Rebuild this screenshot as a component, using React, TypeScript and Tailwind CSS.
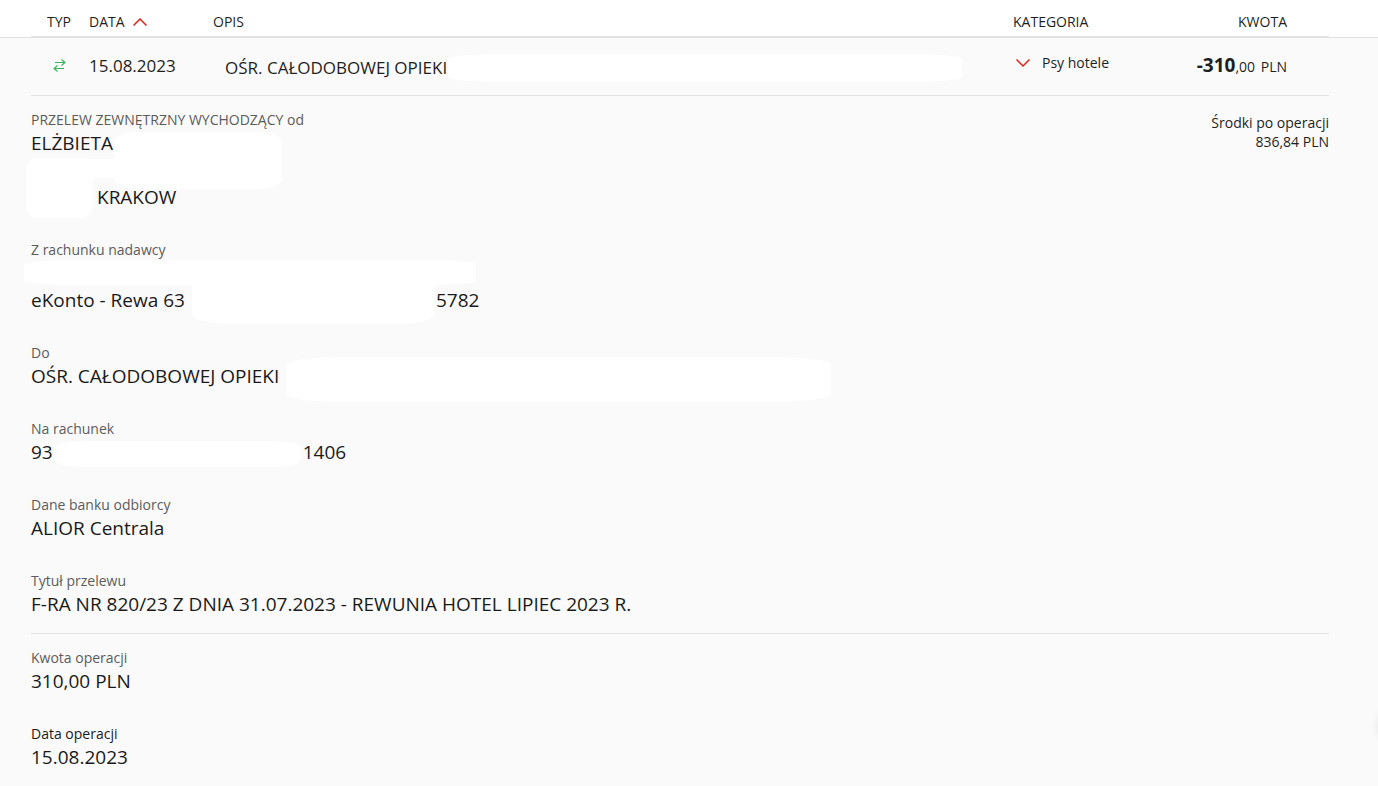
import type { ReactNode } from "react";

const recipientFields = [
  { label: "Dane banku odbiorcy", value: "ALIOR Centrala" },
  { label: "Tytuł przelewu", value: "F-RA NR 820/23 Z DNIA 31.07.2023 - REWUNIA HOTEL LIPIEC 2023 R." },
];

function Chevron({ up = false }: { up?: boolean }) {
  return (
    <svg width="14" height="8" viewBox="0 0 14 8" fill="none" stroke="#d8261c" strokeWidth="1.5" aria-hidden="true">
      <path d={up ? "M0.5 7.5L7 1L13.5 7.5" : "M0.5 0.5L7 7L13.5 0.5"} />
    </svg>
  );
}

function TransferIcon() {
  return (
    <svg className="ml-[22px]" width="13" height="14" viewBox="0 0 13 14" fill="none" stroke="#35b556" strokeWidth="1.1" role="img" aria-label="Przelew">
      <path d="M2 3.5H12M8.5 0.5L12 3.5L8.5 6.5" />
      <path d="M11 9.5H1M4.5 6.5L1 9.5L4.5 12.5" />
    </svg>
  );
}

// White patch that covers private data
function Mask({ className }: { className: string }) {
  return <span aria-hidden="true" className={`absolute bg-white ${className}`} />;
}

function Field({ label, dark = false, children }: { label: string; dark?: boolean; children: ReactNode }) {
  return (
    <div>
      <dt className={`text-sm leading-5 ${dark ? "text-[#1a1a1a]" : "text-[#5c5c5c]"}`}>{label}</dt>
      <dd className="relative text-[19px] leading-[27px] text-[#1a1a1a]">{children}</dd>
    </div>
  );
}

export default function App() {
  return (
    <main className="relative min-h-screen overflow-hidden bg-[#fafafa] font-['Open_Sans',sans-serif] text-[#1f1f1f]">
      <table className="w-full table-fixed border-separate border-spacing-0">
        <colgroup>
          <col className="w-[31px]" />
          <col className="w-[58px]" />
          <col className="w-[124px]" />
          <col />
          <col className="w-[162px]" />
          <col className="w-[154px]" />
          <col className="w-[49px]" />
        </colgroup>
        <thead className="bg-white text-left text-sm">
          <tr className="h-[38px] *:border-[#e1e1e1] *:p-0 *:pt-2 *:font-normal">
            <td className="border-b" />
            <th className="border-b-2"><span className="ml-4">TYP</span></th>
            <th className="border-b-2">
              <button type="button" className="flex items-center gap-2">
                DATA <Chevron up />
              </button>
            </th>
            <th className="border-b-2">OPIS</th>
            <th className="border-b-2">KATEGORIA</th>
            <th className="border-b-2"><span className="mr-[42px] block text-right">KWOTA</span></th>
            <td className="border-b" />
          </tr>
        </thead>
        <tbody>
          <tr className="h-[58px] *:border-[#e1e1e1] *:p-0 *:pb-0.5">
            <td />
            <td className="border-b"><TransferIcon /></td>
            <td className="border-b text-[17px]">15.08.2023</td>
            <td className="border-b text-[17px] leading-6">
              <div className="relative pt-1 pl-3">
                OŚR. CAŁODOBOWEJ OPIEKI
                <Mask className="top-0.5 left-[235px] h-7 w-[514px] rounded-[50px/5px]" />
              </div>
            </td>
            <td className="border-b">
              <button type="button" className="flex items-center gap-3 pb-1.5 pl-[3px] text-sm">
                <Chevron /> Psy hotele
              </button>
            </td>
            <td className="border-b text-right">
              <span className="mr-[42px] block text-sm">
                <b className="text-[19px]">-310</b>,00 <span className="ml-0.5">PLN</span>
              </span>
            </td>
            <td />
          </tr>
        </tbody>
      </table>

      <section className="mr-[49px] ml-[31px] flex items-start justify-between border-b border-[#e1e1e1] pt-3.5 pb-[15px]">
        <dl className="flex flex-col gap-[29px]">
          <Field label="PRZELEW ZEWNĘTRZNY WYCHODZĄCY od">
            ELŻBIETA
            <Mask className="top-0.5 left-[83px] h-[57px] w-[168px] rounded-[24px/10px]" />
            <Mask className="top-7 left-[-5px] h-[60px] w-[67px] rounded-[12px]" />
            <Mask className="top-[29px] left-[50px] h-[19px] w-20" />
            <span className="block pt-[27px] pl-[66px]">KRAKOW</span>
          </Field>
          <Field label="Z rachunku nadawcy">
            <Mask className="top-0 left-[-7px] h-[25px] w-[452px] rounded-[60px/4px]" />
            <Mask className="top-5 left-[161px] h-11 w-[243px] rounded-b-[40px_10px]" />
            <span className="relative flex gap-[251px] pt-[27px]">
              <span>eKonto - Rewa 63</span>
              <span>5782</span>
            </span>
          </Field>
          <Field label="Do">
            OŚR. CAŁODOBOWEJ OPIEKI
            <Mask className="top-[-6px] left-[255px] h-[45px] w-[545px] rounded-[60px/8px]" />
          </Field>
          <Field label="Na rachunek">
            <Mask className="top-[2px] left-[24px] h-[26px] w-[246px] rounded-[30px/7px]" />
            <span className="relative flex gap-[250px]">
              <span>93</span>
              <span>1406</span>
            </span>
          </Field>
          {recipientFields.map((field) => (
            <Field key={field.label} label={field.label}>
              {field.value}
            </Field>
          ))}
        </dl>
        <p className="pt-[3px] text-right text-sm leading-[19px]">
          Środki po operacji
          <br />
          836,84 PLN
        </p>
      </section>

      <dl className="mr-[49px] ml-[31px] flex flex-col gap-[29px] pt-3.5">
        <Field label="Kwota operacji">310,00 PLN</Field>
        <Field label="Data operacji" dark>15.08.2023</Field>
      </dl>

      {/* Side tab waiting just off the edge, only its shadow shows */}
      <div className="absolute top-[708px] -right-[41px] h-9 w-10 rounded-full shadow-[0_0_10px_rgba(0,0,0,0.12)]" />
    </main>
  );
}
